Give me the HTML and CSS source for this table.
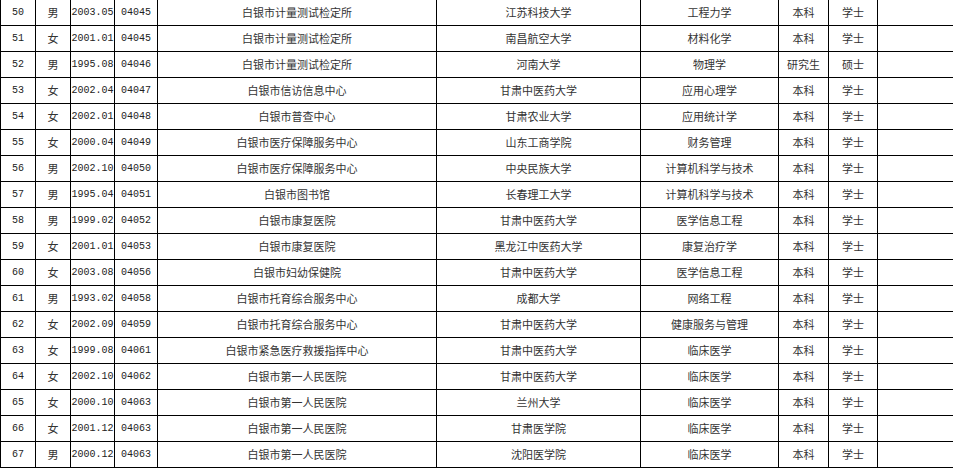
FILE: index.html
```html
<!DOCTYPE html>
<html lang="zh">
<head>
<meta charset="utf-8">
<link rel="stylesheet" href="styles.css">
</head>
<body>
<table class="grid">
<colgroup>
<col class="c-no"><col class="c-sex"><col class="c-date"><col class="c-code"><col class="c-org"><col class="c-school"><col class="c-major"><col class="c-edu"><col class="c-deg"><col class="c-note">
</colgroup>
<tbody>
<tr><td class="num">50</td><td>男</td><td class="num">2003.05</td><td class="num">04045</td><td>白银市计量测试检定所</td><td>江苏科技大学</td><td>工程力学</td><td>本科</td><td>学士</td><td></td></tr>
<tr><td class="num">51</td><td>女</td><td class="num">2001.01</td><td class="num">04045</td><td>白银市计量测试检定所</td><td>南昌航空大学</td><td>材料化学</td><td>本科</td><td>学士</td><td></td></tr>
<tr><td class="num">52</td><td>男</td><td class="num">1995.08</td><td class="num">04046</td><td>白银市计量测试检定所</td><td>河南大学</td><td>物理学</td><td>研究生</td><td>硕士</td><td></td></tr>
<tr><td class="num">53</td><td>女</td><td class="num">2002.04</td><td class="num">04047</td><td>白银市信访信息中心</td><td>甘肃中医药大学</td><td>应用心理学</td><td>本科</td><td>学士</td><td></td></tr>
<tr><td class="num">54</td><td>女</td><td class="num">2002.01</td><td class="num">04048</td><td>白银市普查中心</td><td>甘肃农业大学</td><td>应用统计学</td><td>本科</td><td>学士</td><td></td></tr>
<tr><td class="num">55</td><td>女</td><td class="num">2000.04</td><td class="num">04049</td><td>白银市医疗保障服务中心</td><td>山东工商学院</td><td>财务管理</td><td>本科</td><td>学士</td><td></td></tr>
<tr><td class="num">56</td><td>男</td><td class="num">2002.10</td><td class="num">04050</td><td>白银市医疗保障服务中心</td><td>中央民族大学</td><td>计算机科学与技术</td><td>本科</td><td>学士</td><td></td></tr>
<tr><td class="num">57</td><td>男</td><td class="num">1995.04</td><td class="num">04051</td><td>白银市图书馆</td><td>长春理工大学</td><td>计算机科学与技术</td><td>本科</td><td>学士</td><td></td></tr>
<tr><td class="num">58</td><td>男</td><td class="num">1999.02</td><td class="num">04052</td><td>白银市康复医院</td><td>甘肃中医药大学</td><td>医学信息工程</td><td>本科</td><td>学士</td><td></td></tr>
<tr><td class="num">59</td><td>女</td><td class="num">2001.01</td><td class="num">04053</td><td>白银市康复医院</td><td>黑龙江中医药大学</td><td>康复治疗学</td><td>本科</td><td>学士</td><td></td></tr>
<tr><td class="num">60</td><td>女</td><td class="num">2003.08</td><td class="num">04056</td><td>白银市妇幼保健院</td><td>甘肃中医药大学</td><td>医学信息工程</td><td>本科</td><td>学士</td><td></td></tr>
<tr><td class="num">61</td><td>男</td><td class="num">1993.02</td><td class="num">04058</td><td>白银市托育综合服务中心</td><td>成都大学</td><td>网络工程</td><td>本科</td><td>学士</td><td></td></tr>
<tr><td class="num">62</td><td>女</td><td class="num">2002.09</td><td class="num">04059</td><td>白银市托育综合服务中心</td><td>甘肃中医药大学</td><td>健康服务与管理</td><td>本科</td><td>学士</td><td></td></tr>
<tr><td class="num">63</td><td>女</td><td class="num">1999.08</td><td class="num">04061</td><td>白银市紧急医疗救援指挥中心</td><td>甘肃中医药大学</td><td>临床医学</td><td>本科</td><td>学士</td><td></td></tr>
<tr><td class="num">64</td><td>女</td><td class="num">2002.10</td><td class="num">04062</td><td>白银市第一人民医院</td><td>甘肃中医药大学</td><td>临床医学</td><td>本科</td><td>学士</td><td></td></tr>
<tr><td class="num">65</td><td>女</td><td class="num">2000.10</td><td class="num">04063</td><td>白银市第一人民医院</td><td>兰州大学</td><td>临床医学</td><td>本科</td><td>学士</td><td></td></tr>
<tr><td class="num">66</td><td>女</td><td class="num">2001.12</td><td class="num">04063</td><td>白银市第一人民医院</td><td>甘肃医学院</td><td>临床医学</td><td>本科</td><td>学士</td><td></td></tr>
<tr><td class="num">67</td><td>男</td><td class="num">2000.12</td><td class="num">04063</td><td>白银市第一人民医院</td><td>沈阳医学院</td><td>临床医学</td><td>本科</td><td>学士</td><td></td></tr>
</tbody>
</table>
</body>
</html>
```
FILE: styles.css
```css
html, body {
  margin: 0;
  padding: 0;
  background: #fff;
  overflow: hidden;
}
.grid {
  table-layout: fixed;
  border-collapse: separate;
  border-spacing: 0;
  width: 977px;
  font-family: "Noto Sans CJK SC", "Noto Sans", sans-serif;
  font-size: 11px;
  color: #333;
}
.c-no { width: 35px; }
.c-sex { width: 35px; }
.c-date { width: 44px; }
.c-code { width: 43px; }
.c-org { width: 279px; }
.c-school { width: 204px; }
.c-major { width: 138px; }
.c-edu { width: 50px; }
.c-deg { width: 49px; }
.c-note { width: 100px; }
.grid td {
  box-sizing: border-box;
  height: 26px;
  padding: 0;
  border-left: 1px solid #000;
  border-bottom: 1px solid #000;
  text-align: center;
  vertical-align: middle;
  white-space: nowrap;
  overflow: hidden;
  line-height: 25px;
}
.grid td.num {
  font-family: "Liberation Mono", "DejaVu Sans Mono", monospace;
  font-size: 10px;
  color: #222;
}
```
